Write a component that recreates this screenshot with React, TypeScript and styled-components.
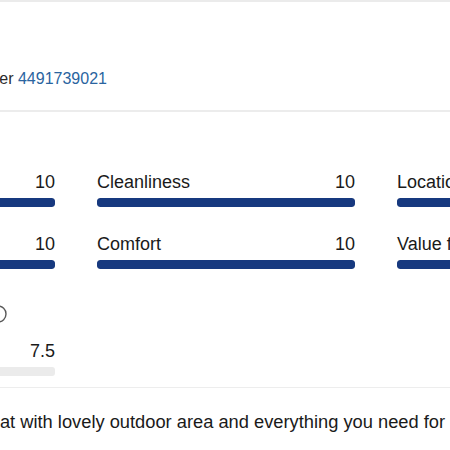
import React from "react";
import styled, { createGlobalStyle } from "styled-components";

const GlobalStyle = createGlobalStyle`
  html, body { margin: 0; padding: 0; background: #ffffff; }
  body { font-family: "Liberation Sans", Arial, sans-serif; color: #1a1a1a; }
`;

const Page = styled.div`
  width: 450px;
  height: 450px;
  overflow: hidden;
  background: #ffffff;
  display: flex;
  flex-direction: column;
`;

const TopRule = styled.div`
  height: 2px;
  background: #ebebeb;
  flex: none;
`;

const Header = styled.section`
  height: 110px;
  box-sizing: border-box;
  padding-top: 67px;
  border-bottom: 2px solid #ececec;
  flex: none;
`;

const HeaderLine = styled.p`
  margin: 0 0 0 -103px;
  font-size: 16px;
  line-height: 20px;
  white-space: nowrap;
  color: #2b2b2b;
`;

const Reference = styled.span`
  color: #2a64a0;
`;

const Scores = styled.section`
  flex: none;
  padding: 59px 0 11px;
  border-bottom: 1px solid #ededed;
  overflow: hidden;
`;

const Grid = styled.div`
  margin-left: -203px;
  display: grid;
  grid-template-columns: repeat(3, 258px);
  column-gap: 42px;
  row-gap: 26px;
`;

const Item = styled.div<{ $span?: boolean }>`
  display: flex;
  flex-direction: column;
  ${(p) => (p.$span ? "grid-column: 1 / 2; margin-top: 8px;" : "")}
`;

const LabelRow = styled.div`
  display: flex;
  justify-content: space-between;
  align-items: center;
  font-size: 18px;
  line-height: 22px;
  white-space: nowrap;
`;

const NoteRow = styled.div`
  width: 210px;
  height: 22px;
  display: flex;
  justify-content: space-between;
  align-items: center;
  font-size: 18px;
  line-height: 22px;
  margin-bottom: 15px;
`;

const ScoreRow = styled.div`
  display: flex;
  justify-content: flex-end;
  font-size: 18px;
  line-height: 22px;
`;

const Track = styled.div`
  margin-top: 5px;
  height: 9px;
  border-radius: 3px;
  background: #ebebeb;
  overflow: hidden;
`;

const Fill = styled.div`
  height: 100%;
  background: #17397f;
  border-radius: 3px;
`;

const Review = styled.section`
  padding-top: 23px;
  flex: none;
`;

const ReviewText = styled.p`
  margin: 0 0 0 -60px;
  font-size: 18.3px;
  line-height: 22px;
  white-space: nowrap;
  color: #1a1a1a;
`;

const InfoIcon = () => (
  <svg width="18" height="18" viewBox="0 0 18 18" aria-hidden="true">
    <circle cx="9" cy="9" r="8" fill="none" stroke="#595959" strokeWidth="1.4" />
    <circle cx="9" cy="5.2" r="1" fill="#595959" />
    <path d="M9 8v5.5" stroke="#595959" strokeWidth="1.5" strokeLinecap="round" />
  </svg>
);

type Score = { label: string; value: number };

const scores: Score[] = [
  { label: "Staff", value: 10 },
  { label: "Cleanliness", value: 10 },
  { label: "Location", value: 10 },
  { label: "Facilities", value: 10 },
  { label: "Comfort", value: 10 },
  { label: "Value for money", value: 10 },
];

const fmt = (v: number) => (Number.isInteger(v) ? String(v) : v.toFixed(1));

export default function App() {
  return (
    <>
      <GlobalStyle />
      <Page>
        <TopRule />
        <Header>
          <HeaderLine>
            Booking number <Reference>4491739021</Reference>
          </HeaderLine>
        </Header>
        <Scores>
          <Grid>
            {scores.map((s) => (
              <Item key={s.label}>
                <LabelRow>
                  <span>{s.label}</span>
                  <span>{fmt(s.value)}</span>
                </LabelRow>
                <Track>
                  <Fill style={{ width: `${s.value * 10}%` }} />
                </Track>
              </Item>
            ))}
            <Item $span>
              <NoteRow>
                <span>Free WiFi</span>
                <InfoIcon />
              </NoteRow>
              <ScoreRow>7.5</ScoreRow>
              <Track>
                <Fill style={{ width: "75%" }} />
              </Track>
            </Item>
          </Grid>
        </Scores>
        <Review>
          <ReviewText>
            Great flat with lovely outdoor area and everything you need for&nbsp;&nbsp;a relaxing stay.
          </ReviewText>
        </Review>
      </Page>
    </>
  );
}
